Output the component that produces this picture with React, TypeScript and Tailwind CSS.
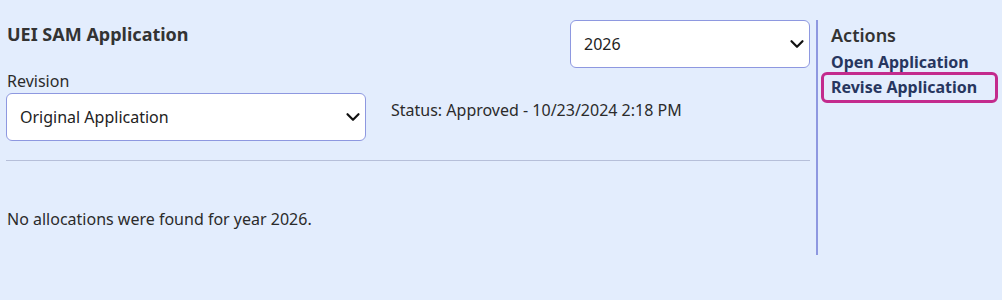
import { ChevronDown } from 'lucide-react'

const font = { fontFamily: '"Noto Sans", "Open Sans", sans-serif' }

function SelectBox({ value, className }: { value: string; className: string }) {
  return (
    <div className={`relative ${className}`}>
      <select
        defaultValue={value}
        className="h-full w-full appearance-none rounded-[6px] border border-[#8e98e0] bg-white pl-[13px] pr-10 text-[16px] text-[#222] outline-none"
      >
        <option>{value}</option>
      </select>
      <ChevronDown
        className="pointer-events-none absolute right-[2px] top-1/2 h-[22px] w-[22px] -translate-y-1/2 text-[#111]"
        strokeWidth={2.4}
      />
    </div>
  )
}

export default function App() {
  return (
    <div className="flex h-[300px] w-[1002px] bg-[#e3edfd] text-[#2b2b2b]" style={font}>
      {/* Main */}
      <div className="w-[816px] pl-[6px] pr-[6px] pt-[20px]">
        <div className="flex items-start justify-between">
          <h2 className="pl-px pt-[2px] text-[18px] font-bold leading-[24px] text-[#333]">UEI SAM Application</h2>
          <SelectBox value="2026" className="h-[48px] w-[240px]" />
        </div>
        <div className="pl-px pt-[2px] text-[16px] leading-[22px]">Revision</div>
        <div className="mt-px flex items-start">
          <SelectBox value="Original Application" className="h-[48px] w-[360px]" />
          <div className="pl-[25px] pt-[6px] text-[16px] leading-[22px]">Status: Approved - 10/23/2024 2:18 PM</div>
        </div>
        <hr className="mt-[19px] border-t border-[#b6bfd9]" />
        <p className="pl-px pt-[47px] text-[16px] leading-[22px]">No allocations were found for year 2026.</p>
      </div>

      {/* Actions */}
      <div className="mt-[20px] h-[235px] flex-1 border-l-2 border-[#8e98e0] pl-[6px] pr-[7px]">
        <h3 className="pl-[7px] pt-[2px] text-[18px] font-semibold leading-[26px] text-[#333]">Actions</h3>
        <a className="mt-[2px] block pl-[7px] text-[16px] font-bold leading-[25px] text-[#27365f]" href="#">
          Open Application
        </a>
        <a
          className="block rounded-[3px] pl-[7px] text-[16px] font-bold leading-[25px] text-[#27365f] outline-[3px] outline-[#c32b8d] outline-solid"
          href="#"
        >
          Revise Application
        </a>
      </div>
    </div>
  )
}
